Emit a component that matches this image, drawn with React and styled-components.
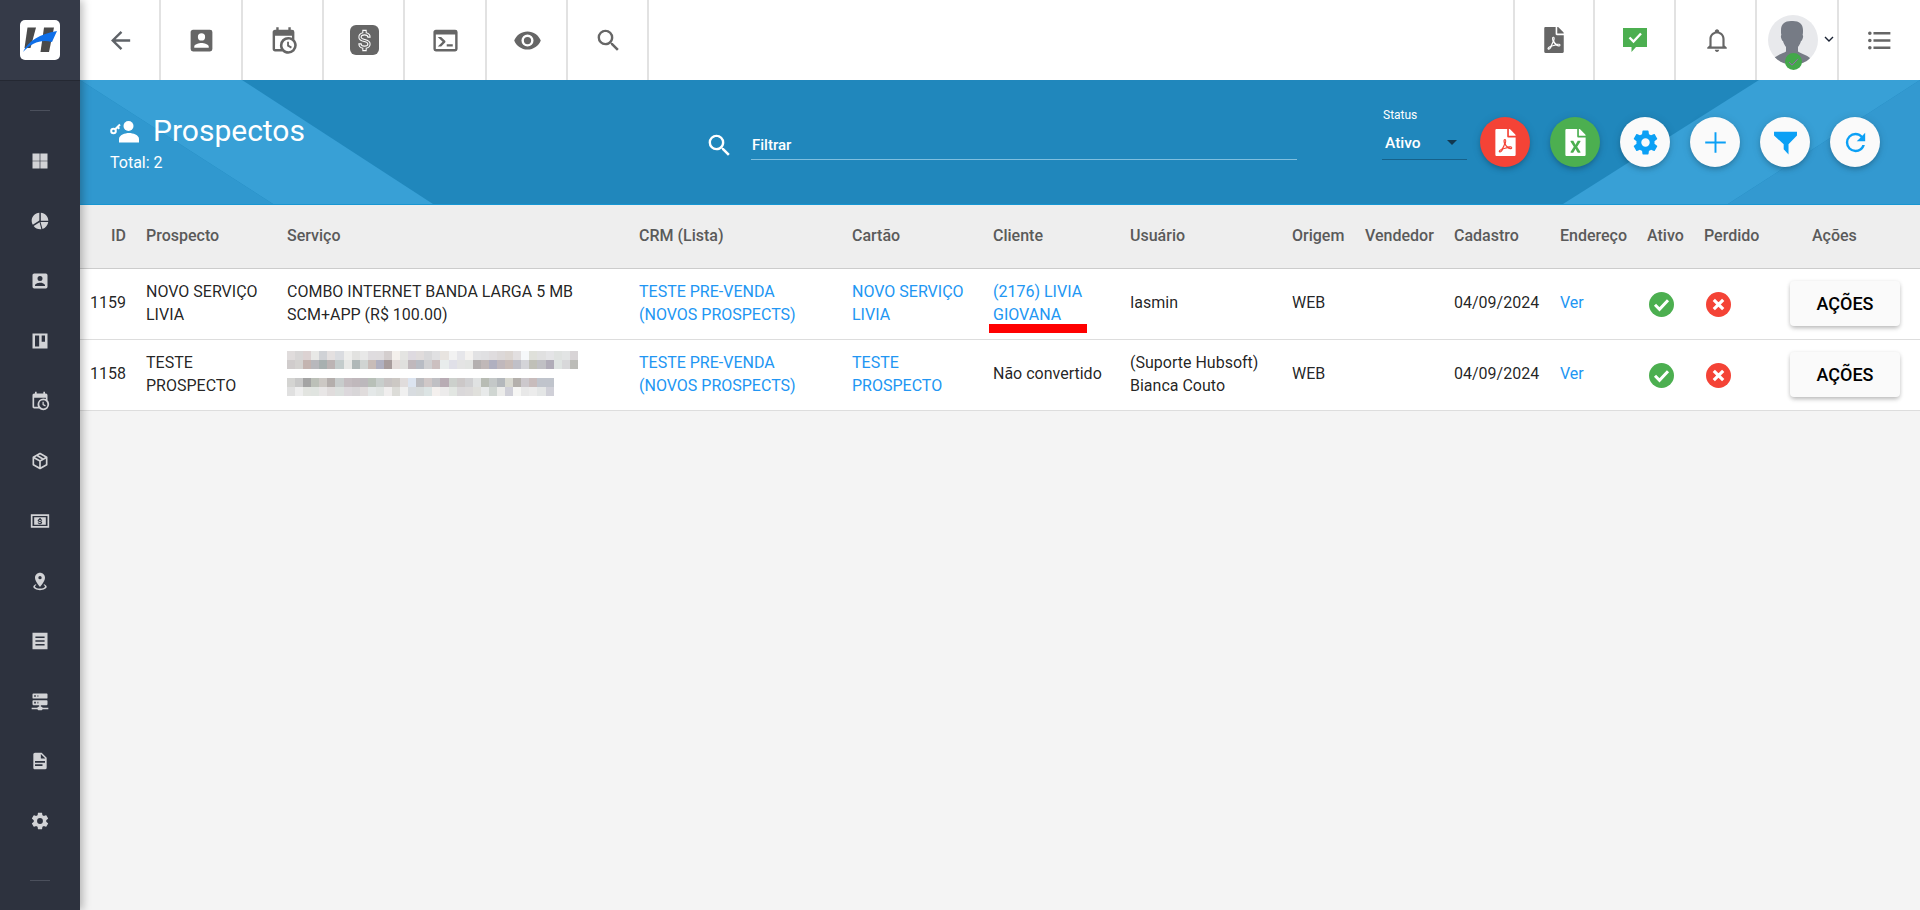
import React from 'react';
import styled, { createGlobalStyle } from 'styled-components';
import { FaFilePdf, FaFileExcel } from 'react-icons/fa';

const GlobalStyle = createGlobalStyle`
  html, body { margin: 0; height: 100%; background: #f4f4f4; }
  #root { height: 100%; }
  * { box-sizing: border-box; }
  body { font-family: Roboto, 'Noto Sans', sans-serif; color: rgba(0,0,0,.87); }
`;

const paths = {
  back: 'M20,11V13H8L13.5,18.5L12.08,19.92L4.16,12L12.08,4.08L13.5,5.5L8,11H20Z',
  contact: 'M6,17C6,15 10,14 12,14C14,14 18,15 18,17V18H6M15,9A3,3 0 0,1 12,12A3,3 0 0,1 9,9A3,3 0 0,1 12,6A3,3 0 0,1 15,9M3,5V19A2,2 0 0,0 5,21H19A2,2 0 0,0 21,19V5A2,2 0 0,0 19,3H5C3.89,3 3,3.9 3,5Z',
  calendar: 'M15,13H16.5V15.82L18.94,17.23L18.19,18.53L15,16.69V13M19,8H5V19H9.67C9.24,18.09 9,17.07 9,16A7,7 0 0,1 16,9C17.07,9 18.09,9.24 19,9.67V8M5,21C3.89,21 3,20.1 3,19V5C3,3.89 3.89,3 5,3H6V1H8V3H16V1H18V3H19A2,2 0 0,1 21,5V11.1C22.24,12.36 23,14.09 23,16A7,7 0 0,1 16,23C14.09,23 12.36,22.24 11.1,21H5M16,11.15A4.85,4.85 0 0,0 11.15,16C11.15,18.68 13.32,20.85 16,20.85A4.85,4.85 0 0,0 20.85,16C20.85,13.32 18.68,11.15 16,11.15Z',
  console: 'M20,19V7H4V19H20M20,3A2,2 0 0,1 22,5V19A2,2 0 0,1 20,21H4A2,2 0 0,1 2,19V5C2,3.89 2.9,3 4,3H20M13,17V15H18V17H13M9.58,13L5.57,9H8.4L11.7,12.3C12.09,12.69 12.09,13.33 11.7,13.72L8.42,17H5.59L9.58,13Z',
  eye: 'M12,9A3,3 0 0,0 9,12A3,3 0 0,0 12,15A3,3 0 0,0 15,12A3,3 0 0,0 12,9M12,17A5,5 0 0,1 7,12A5,5 0 0,1 12,7A5,5 0 0,1 17,12A5,5 0 0,1 12,17M12,4.5C7,4.5 2.73,7.61 1,12C2.73,16.39 7,19.5 12,19.5C17,19.5 21.27,16.39 23,12C21.27,7.61 17,4.5 12,4.5Z',
  search: 'M9.5,3A6.5,6.5 0 0,1 16,9.5C16,11.11 15.41,12.59 14.44,13.73L14.71,14H15.5L20.5,19L19,20.5L14,15.5V14.71L13.73,14.44C12.59,15.41 11.11,16 9.5,16A6.5,6.5 0 0,1 3,9.5A6.5,6.5 0 0,1 9.5,3M9.5,5C7,5 5,7 5,9.5C5,12 7,14 9.5,14C12,14 14,12 14,9.5C14,7 12,5 9.5,5Z',
  bell: 'M10 21H14C14 22.1 13.1 23 12 23S10 22.1 10 21M21 19V20H3V19L5 17V11C5 7.9 7 5.2 10 4.3V4C10 2.9 10.9 2 12 2S14 2.9 14 4V4.3C17 5.2 19 7.9 19 11V17L21 19M17 11C17 8.2 14.8 6 12 6S7 8.2 7 11V18H17V11Z',
  list: 'M7,5H21V7H7V5M7,13V11H21V13H7M4,4.5A1.5,1.5 0 0,1 5.5,6A1.5,1.5 0 0,1 4,7.5A1.5,1.5 0 0,1 2.5,6A1.5,1.5 0 0,1 4,4.5M4,10.5A1.5,1.5 0 0,1 5.5,12A1.5,1.5 0 0,1 4,13.5A1.5,1.5 0 0,1 2.5,12A1.5,1.5 0 0,1 4,10.5M7,19V17H21V19H7M4,16.5A1.5,1.5 0 0,1 5.5,18A1.5,1.5 0 0,1 4,19.5A1.5,1.5 0 0,1 2.5,18A1.5,1.5 0 0,1 4,16.5Z',
  cog: 'M12,15.5A3.5,3.5 0 0,1 8.5,12A3.5,3.5 0 0,1 12,8.5A3.5,3.5 0 0,1 15.5,12A3.5,3.5 0 0,1 12,15.5M19.43,12.97C19.47,12.65 19.5,12.33 19.5,12C19.5,11.67 19.47,11.34 19.43,11L21.54,9.37C21.73,9.22 21.78,8.95 21.66,8.73L19.66,5.27C19.54,5.05 19.27,4.96 19.05,5.05L16.56,6.05C16.04,5.66 15.5,5.32 14.87,5.07L14.5,2.42C14.46,2.18 14.25,2 14,2H10C9.75,2 9.54,2.18 9.5,2.42L9.13,5.07C8.5,5.32 7.96,5.66 7.44,6.05L4.95,5.05C4.73,4.96 4.46,5.05 4.34,5.27L2.34,8.73C2.21,8.95 2.27,9.22 2.46,9.37L4.57,11C4.53,11.34 4.5,11.67 4.5,12C4.5,12.33 4.53,12.65 4.57,12.97L2.46,14.63C2.27,14.78 2.21,15.05 2.34,15.27L4.34,18.73C4.46,18.95 4.73,19.03 4.95,18.95L7.44,17.94C7.96,18.34 8.5,18.68 9.13,18.93L9.5,21.58C9.54,21.82 9.75,22 10,22H14C14.25,22 14.46,21.82 14.5,21.58L14.87,18.93C15.5,18.67 16.04,18.34 16.56,17.94L19.05,18.95C19.27,19.03 19.54,18.95 19.66,18.73L21.66,15.27C21.78,15.05 21.73,14.78 21.54,14.63L19.43,12.97Z',
  refresh: 'M17.65,6.35C16.2,4.9 14.21,4 12,4A8,8 0 0,0 4,12A8,8 0 0,0 12,20C15.73,20 18.84,17.45 19.73,14H17.65C16.83,16.33 14.61,18 12,18A6,6 0 0,1 6,12A6,6 0 0,1 12,6C13.66,6 15.14,6.69 16.22,7.78L13,11H20V4L17.65,6.35Z',
  plus: 'M11.2 3.5h1.6v7.7h7.7v1.6h-7.7v7.7h-1.6v-7.7H3.5v-1.6h7.7z',
  funnel: 'M2.5 3H21.5V6.2L14.5 13.5V22L10.5 17.5V13.5L2.5 6.2Z',
  grid: 'M3,3H11.6V11.6H3ZM12.4,3H21V11.6H12.4ZM3,12.4H11.6V21H3ZM12.4,12.4H21V21H12.4Z',
  pie: 'M11.2,2.2V11.4L3.4,16.6C2.5,15.2 2,13.6 2,12C2,6.8 6,2.6 11.2,2.2M13,2C18,2.4 22,6.6 22,11.6H13ZM12.6,13.2H21.9C21.4,17 18.6,20.4 15,21.5ZM4.4,18L11.5,13.4L13.6,21.9C9.9,22.3 6.4,20.8 4.4,18Z',
  kanban: 'M3 3H21V21H3ZM6 5.5V18.5H11V5.5ZM14 5.5V13H18V5.5Z',
  box: 'M21,16.5C21,16.88 20.79,17.21 20.47,17.38L12.57,21.82C12.41,21.94 12.21,22 12,22C11.79,22 11.59,21.94 11.43,21.82L3.53,17.38C3.21,17.21 3,16.88 3,16.5V7.5C3,7.12 3.21,6.79 3.53,6.62L11.43,2.18C11.59,2.06 11.79,2 12,2C12.21,2 12.41,2.06 12.57,2.18L20.47,6.62C20.79,6.79 21,7.12 21,7.5V16.5M12,4.15L10.11,5.22L16,8.61L17.96,7.5L12,4.15M6.04,7.5L12,10.85L13.96,9.75L8.08,6.35L6.04,7.5M5,15.91L11,19.29V12.58L5,9.21V15.91M19,15.91V9.21L13,12.58V19.29L19,15.91Z',
  cash: 'M1 4H23V20H1ZM3 6V18H21V6ZM5 7.5H19V16.5H5ZM11.2 8.5V9.6C10 9.8 9.2 10.6 9.2 11.5C9.2 12.6 10.2 13 11.6 13.3C12.5 13.5 13.1 13.7 13.1 14.1C13.1 14.5 12.6 14.7 12 14.7C11.3 14.7 10.8 14.4 10.7 13.9H9.2C9.3 14.8 10.1 15.4 11.2 15.6V16H12.8V15.6C13.9 15.4 14.6 14.7 14.6 13.9C14.6 12.8 13.6 12.4 12.3 12.1C11.3 11.9 10.7 11.8 10.7 11.4C10.7 11 11.2 10.8 11.9 10.8C12.5 10.8 13 11.1 13.1 11.6H14.6C14.5 10.7 13.8 10 12.8 9.7V8.5Z',
  pin: 'M12,2C15.31,2 18,4.66 18,7.95C18,12.41 12,19 12,19C12,19 6,12.41 6,7.95C6,4.66 8.69,2 12,2M12,6A2,2 0 0,0 10,8A2,2 0 0,0 12,10A2,2 0 0,0 14,8A2,2 0 0,0 12,6M20,19C20,21.21 16.42,23 12,23C7.58,23 4,21.21 4,19C4,17.71 5.22,16.56 7.11,15.83L7.75,16.74C6.67,17.19 6,17.81 6,18.5C6,19.88 8.69,21 12,21C15.31,21 18,19.88 18,18.5C18,17.81 17.33,17.19 16.25,16.74L16.89,15.83C18.78,16.56 20,17.71 20,19Z',
  receipt: 'M3 2H21V22H3ZM6.5 6.5V8.5H17.5V6.5ZM6.5 11V13H17.5V11ZM6.5 15.5V17.5H17.5V15.5Z',
  server: 'M13,19H14A1,1 0 0,1 15,20H22V22H15A1,1 0 0,1 14,23H10A1,1 0 0,1 9,22H2V20H9A1,1 0 0,1 10,19H11V17H4A1,1 0 0,1 3,16V12A1,1 0 0,1 4,11H20A1,1 0 0,1 21,12V16A1,1 0 0,1 20,17H13V19M4,3H20A1,1 0 0,1 21,4V8A1,1 0 0,1 20,9H4A1,1 0 0,1 3,8V4A1,1 0 0,1 4,3M9,7H10V5H9V7M9,15H10V13H9V15M5,5V7H7V5H5M5,13V15H7V13H5Z',
  doc: 'M13,9H18.5L13,3.5V9M6,2H14L20,8V20A2,2 0 0,1 18,22H6C4.89,22 4,21.1 4,20V4C4,2.89 4.89,2 6,2M15,18V16H6V18H15M18,14V12H6V14H18Z',
  dollar: 'M7,15H9C9,16.08 10.37,17 12,17C13.63,17 15,16.08 15,15C15,13.9 13.96,13.5 11.76,12.97C9.64,12.44 7,11.78 7,9C7,7.21 8.47,5.69 10.5,5.18V3H13.5V5.18C15.53,5.69 17,7.21 17,9H15C15,7.92 13.63,7 12,7C10.37,7 9,7.92 9,9C9,10.1 10.04,10.5 12.24,11.03C14.36,11.56 17,12.22 17,15C17,16.79 15.53,18.31 13.5,18.82V21H10.5V18.82C8.47,18.31 7,16.79 7,15Z',
};

const Glyph = styled.svg`
  display: block;
  flex: none;
  width: ${(p) => p.$size || 24}px;
  height: ${(p) => p.$size || 24}px;
  fill: ${(p) => p.$color || '#666'};
  fill-rule: evenodd;
`;

const Icon = ({ name, size, color }) => (
  <Glyph viewBox="0 0 24 24" $size={size} $color={color}>
    <path d={paths[name]} />
  </Glyph>
);

const Shell = styled.div`
  display: flex;
  height: 100vh;
  overflow: hidden;
`;

const Sidebar = styled.aside`
  flex: 0 0 80px;
  display: flex;
  flex-direction: column;
  align-items: center;
  background: #2d323e;
  box-shadow: 3px 0 8px rgba(0, 0, 0, 0.25);
  position: relative;
  z-index: 3;
`;

const LogoBar = styled.div`
  width: 100%;
  height: 81px;
  flex: none;
  display: flex;
  align-items: center;
  justify-content: center;
  background: #353a48;
  border-bottom: 1px solid #242832;
  padding-bottom: 1px;
`;

const LogoBox = styled.svg`
  width: 40px;
  height: 40px;
  display: block;
`;

const SideRule = styled.hr`
  width: 20px;
  height: 1px;
  margin: ${(p) => p.$margin};
  border: 0;
  background: #4b505c;
`;

const SideItem = styled.a`
  width: 100%;
  height: 60px;
  flex: none;
  display: flex;
  align-items: center;
  justify-content: center;
`;

const Main = styled.main`
  flex: 1;
  min-width: 0;
  display: flex;
  flex-direction: column;
`;

const TopBar = styled.header`
  height: 80px;
  flex: none;
  display: flex;
  justify-content: space-between;
  background: #fff;
`;

const ToolGroup = styled.nav`
  display: flex;
`;

const ToolCell = styled.a`
  width: 81.33px;
  height: 80px;
  display: flex;
  align-items: center;
  justify-content: center;
  position: relative;
  padding-left: ${(p) => (p.$open || p.$edge ? '0' : '2px')};
  border-right: ${(p) => (p.$open ? '0' : '2px solid #e2e2e2')};
  border-left: ${(p) => (p.$edge ? '2px solid #e2e2e2' : '0')};
`;

const DollarTile = styled.span`
  width: 29px;
  height: 30px;
  border-radius: 6px;
  background: #666;
  display: flex;
  align-items: center;
  justify-content: center;
  svg { fill: none; stroke: #fff; stroke-width: 0.9; }
`;

const Avatar = styled.span`
  width: 50px;
  height: 50px;
  border-radius: 50%;
  background: #e8e9ec;
  overflow: hidden;
  display: block;
`;

const AvatarWrap = styled.span`
  position: relative;
  display: block;
  width: 50px;
  height: 50px;
  margin-left: -11px;
`;

const OnlineBadge = styled.svg`
  position: absolute;
  left: 17px;
  top: 38px;
  width: 17px;
  height: 17px;
`;

const Chevron = styled.svg`
  position: absolute;
  right: 3px;
  top: 35px;
  width: 10px;
  height: 8px;
`;

const Banner = styled.section`
  height: 125px;
  flex: none;
  position: relative;
  overflow: hidden;
  background: #2087bc;
  border-bottom: 1px solid #1796d2;
`;

const Facet = styled.i`
  position: absolute;
  inset: 0;
  background: ${(p) => p.$color};
  clip-path: polygon(${(p) => p.$points});
`;

const BannerRow = styled.div`
  position: relative;
  height: 100%;
  display: flex;
  align-items: flex-start;
  padding: 37px 40px 0 30px;
`;

const TitleBlock = styled.div`
  flex: 0 0 598px;
  color: #fff;
`;

const TitleRow = styled.div`
  display: flex;
  align-items: center;
  gap: 14px;
  height: 30px;
  margin-top: -1px;
`;

const Title = styled.h1`
  margin: 0;
  font-size: 30px;
  font-weight: 400;
  line-height: 30px;
`;

const Total = styled.div`
  margin-top: 7px;
  font-size: 16px;
  line-height: 20px;
`;

const SearchBox = styled.div`
  flex: 0 0 589px;
  margin-top: 12px;
  display: flex;
  align-items: flex-start;
  gap: 17px;
`;

const SearchIcon = styled.span`
  margin: 2px 0 0 -3px;
`;

const SearchField = styled.div`
  flex: 1;
  height: 31px;
  padding: 6px 0 0 1px;
  border-bottom: 1px solid #7fbfdf;
  color: #fff;
  font-size: 15px;
  font-weight: 500;
  line-height: 20px;
`;

const ActionGroup = styled.div`
  margin-left: auto;
  display: flex;
  align-items: flex-start;
  gap: 20px;
`;

const StatusSelect = styled.div`
  width: 85px;
  height: 43px;
  margin: 0 -7px 0 0;
  position: relative;
  color: #fff;
  border-bottom: 1px solid #16618a;
`;

const StatusLabel = styled.div`
  font-size: 12px;
  line-height: 14px;
  margin-top: -9px;
  padding-left: 1px;
`;

const StatusValue = styled.div`
  font-size: 15.5px;
  line-height: 20px;
  font-weight: 500;
  margin: 11px 0 0 3px;
`;

const Caret = styled.span`
  position: absolute;
  right: 10px;
  top: 23px;
  border-left: 5px solid transparent;
  border-right: 5px solid transparent;
  border-top: 5px solid #12384f;
`;

const Fab = styled.button`
  width: 50px;
  height: 50px;
  border: 0;
  padding: 0;
  border-radius: 50%;
  background: ${(p) => p.$bg || '#fafafa'};
  color: ${(p) => p.$fg || '#0ba0f5'};
  display: flex;
  align-items: center;
  justify-content: center;
  box-shadow: 0 3px 5px -1px rgba(0, 0, 0, 0.2), 0 1px 10px 0 rgba(0, 0, 0, 0.12);
`;

const Table = styled.table`
  width: 1840px;
  table-layout: fixed;
  border-collapse: collapse;
  font-size: 16px;
  line-height: 23px;
`;

const Head = styled.th`
  width: ${(p) => p.$w}px;
  height: 63px;
  padding: 0 ${(p) => p.$pr || 0}px 2px ${(p) => p.$pl || 0}px;
  text-align: ${(p) => p.$align || 'left'};
  font-weight: 500;
  color: #5a5a5a;
  background: #eee;
  border-bottom: 1px solid #ccc;
`;

const Row = styled.tr`
  height: 71px;
  background: #fff;
  border-bottom: 1px solid #ddd;
`;

const Cell = styled.td`
  padding: 0 ${(p) => p.$pr || 0}px 2px ${(p) => p.$pl || 0}px;
  text-align: ${(p) => p.$align || 'left'};
  overflow: visible;
`;

const LinkText = styled.a`
  color: #2196f3;
  position: relative;
  display: inline-block;
`;

const RedMark = styled.span`
  position: absolute;
  left: -4px;
  top: 44px;
  width: 98px;
  height: 9px;
  background: #f00;
`;

const Mosaic = styled.div`
  display: flex;
  flex-direction: column;
  gap: 9px;
`;

const TileRow = styled.div`
  display: flex;
  height: 9px;
`;

const Tile = styled.span`
  width: 8.08px;
  height: 9px;
  flex: none;
  background: ${(p) => p.$c};
`;

const ActionButton = styled.button`
  display: block;
  width: 110px;
  height: 45px;
  margin-top: 1px;
  border: 0;
  border-radius: 4px;
  background: #fafafa;
  color: #000;
  font: 500 18px Roboto, sans-serif;
  box-shadow: 0 3px 5px -1px rgba(0, 0, 0, 0.2), 0 1px 4px 0 rgba(0, 0, 0, 0.14);
`;

const StateDot = styled.svg`
  display: block;
  width: 25px;
  height: 25px;
  margin: 4px 0 0 2px;
`;

const blur = [
  'e0dcdc d8d6d6 dcd2d2 e8e8e6 d0d2d6 e4e0e0 dadce0 eeeeec e2e2e0 e8e8e8 dfdcdf dfdcde d4cece f4f0ec e4e4e2 dedae0 e0dcdc d8d8da e0e0e2 e8e4e0 f2f2f2 e6e6ea f4f2f0 e2e2e4 e0e0e2 dfdcde dcd8d8 dcd6d2 e2dfe0 f6f8fa dfe0da e0e0e0 e4e4e6 dfe2e0 e2e4e4 d8d4d6',
  'd0cccc d4d2d0 c4b4b0 b8b8bc a8b0b0 bcb4b4 c4cccc e8e8e6 b0b8b8 d0d4d2 c8bcb8 b0b0c0 a89c9c e4dcda e0e0de c0b8bc b8bcc4 d0d0d2 ccc0c0 e8ecec e0e0e8 e4e4e4 e2e4e2 b4b0b0 c0b8b8 b0b0c0 c0b8bc c8bcb8 c0c0c8 d4d4d8 c0c0b8 c0c0c4 b0acb8 dfe4e2 d8d8da bcbcb8',
  'd4d4d2 c8c8c8 a4a4a4 bcc0b8 ccc8c4 b4aeac c8cccc c4bcc0 c0b8bc bcb8bc b8c0b8 c8cecc c8c4c4 ccc8c4 e0dcdc dce4f0 bcbcc0 d0c8c8 c0c0c4 b8acb4 ccd0cc ccc8c8 d0d0d2 e0e2e2 b8bcb4 c4c8c8 b4b8bc d8d8d0 b4b0ac ccc8cc c8bcbc c0c4cc c0c4cc',
  'e0e0e0 eeeeee e2e4e0 e0e4e0 e8e6e6 e0dcdc dce0de dcd8dc d8d6d8 e0dcdc e4e8e8 e0e4e2 f0eeee dcdcd8 f0f0f0 d8dce0 d8dcdc dce4e4 f4f0ee ecebeb e2e6e2 dad8da dcdada e0e0dc e8eaea d0d6d2 ececea d0d0d8 f6f6f4 e8e8e8 ececec e4e6e6 d0d0d8',
];

const BlurLine = ({ rows }) => (
  <div>
    {rows.map((row, r) => (
      <TileRow key={r}>
        {row.split(' ').map((c, i) => <Tile key={i} $c={`#${c}`} />)}
      </TileRow>
    ))}
  </div>
);

const Check = () => (
  <StateDot viewBox="0 0 25 25">
    <circle cx="12.5" cy="12.5" r="12.5" fill="#4caf50" />
    <path d="M6 12.800l4.500 4.500 8.500-9" fill="none" stroke="#fff" strokeWidth="3" />
  </StateDot>
);

const Cross = () => (
  <StateDot viewBox="0 0 25 25">
    <circle cx="12.5" cy="12.5" r="12.5" fill="#f44336" />
    <path d="M7.800 7.800l9.400 9.400M17.200 7.800l-9.400 9.400" fill="none" stroke="#fff" strokeWidth="3.200" />
  </StateDot>
);

const sideItems = ['grid', 'pie', 'contact', 'kanban', 'calendar', 'box', 'cash', 'pin', 'receipt', 'server', 'doc', 'cog'];

const columns = [
  { label: 'ID', w: 66, pr: 20, align: 'right' },
  { label: 'Prospecto', w: 141 },
  { label: 'Serviço', w: 352 },
  { label: 'CRM (Lista)', w: 213 },
  { label: 'Cartão', w: 141 },
  { label: 'Cliente', w: 137 },
  { label: 'Usuário', w: 162 },
  { label: 'Origem', w: 73 },
  { label: 'Vendedor', w: 89 },
  { label: 'Cadastro', w: 106 },
  { label: 'Endereço', w: 87 },
  { label: 'Ativo', w: 57 },
  { label: 'Perdido', w: 86 },
  { label: 'Ações', w: 130, pl: 22 },
];

const App = () => (
  <Shell>
    <GlobalStyle />
    <Sidebar>
      <LogoBar>
        <LogoBox viewBox="0 0 40 40">
          <rect width="40" height="40" rx="5" fill="#fff" />
          <path d="M7.500 7.500H16L10.500 28H4.500Z" fill="#4a4a4a" />
          <path d="M24 7.500H34L29 32H20.500Z" fill="#4a4a4a" />
          <path d="M3 32C8 21 20 14 37 11L32 22C22 19 12 22 3 32Z" fill="#0f6fe8" />
        </LogoBox>
      </LogoBar>
      <SideRule $margin="29px 0 20px" />
      {sideItems.map((name) => (
        <SideItem key={name}>
          <Icon name={name} size={20} color="#d2d3d6" />
        </SideItem>
      ))}
      <SideRule $margin="29px 0 0" />
    </Sidebar>

    <Main>
      <TopBar>
        <ToolGroup>
          <ToolCell><Icon name="back" size={29} color="#5f6368" /></ToolCell>
          <ToolCell><Icon name="contact" size={29} /></ToolCell>
          <ToolCell><Icon name="calendar" size={29} /></ToolCell>
          <ToolCell><DollarTile><Icon name="dollar" size={27} /></DollarTile></ToolCell>
          <ToolCell><Icon name="console" size={29} /></ToolCell>
          <ToolCell><Icon name="eye" size={29} /></ToolCell>
          <ToolCell><Icon name="search" size={29} /></ToolCell>
        </ToolGroup>
        <ToolGroup>
          <ToolCell $edge><FaFilePdf size={26} color="#666" /></ToolCell>
          <ToolCell>
            <Glyph viewBox="0 0 26 26" $size={26} $color="#4caf50">
              <path d="M1 1H25V20H14L9.500 25V20H1Z" />
              <path d="M7.500 10.500l4 4 7.500-8" fill="none" stroke="#fff" strokeWidth="2.400" />
            </Glyph>
          </ToolCell>
          <ToolCell><Icon name="bell" size={26} /></ToolCell>
          <ToolCell>
            <AvatarWrap>
              <Avatar>
                <svg viewBox="0 0 50 50" width="50" height="50">
                  <path fill="#767b85" d="M25 6c6 0 10 3 10 9 0 2 0 4-.4 5 .8.3.7 2.500-.3 4.500-.6 1.200-.9 1.500-1.300 1.600-.6 2.400-1.800 4.500-3 5.900v4.500c3 2 9 3.500 12 6.500l-2 7H8l-2-7c3-3 9-4.500 12-6.500V32c-1.200-1.400-2.400-3.500-3-5.900-.4-.1-.7-.4-1.300-1.600-1-2-1.100-4.200-.3-4.500-.4-1-.4-3-.4-5 0-6 4-9 10-9Z" />
                </svg>
              </Avatar>
              <OnlineBadge viewBox="0 0 17 17">
                <circle cx="8.500" cy="8.500" r="8.500" fill="#43a84a" />
                <path d="M4 9l3 3.200 6-6.400" fill="none" stroke="#9a62b5" strokeWidth="1" />
              </OnlineBadge>
            </AvatarWrap>
            <Chevron viewBox="0 0 10 8"><path d="M1 2l4 4 4-4" fill="none" stroke="#1a2233" strokeWidth="1.400" /></Chevron>
          </ToolCell>
          <ToolCell $open><Icon name="list" size={29} /></ToolCell>
        </ToolGroup>
      </TopBar>

      <Banner>
        <Facet $color="#38a0d6" $points="0 0, 162px 0, 353px 124px, 193px 124px" />
        <Facet $color="#3098cf" $points="0 0, 193px 124px, 0 124px" />
        <Facet $color="#38a0d6" $points="1679px 0, 1840px 0, 1648px 124px, 1483px 124px" />
        <Facet $color="#3399d0" $points="1840px 0, 1840px 124px, 1648px 124px" />
        <BannerRow>
          <TitleBlock>
            <TitleRow>
              <Glyph viewBox="0 0 29 22" $size={29} $color="#fff">
                <circle cx="18.500" cy="5.500" r="5" />
                <path d="M9 22V18.500C9 14.500 15 12.500 19 12.500S29 14.500 29 18.500V22Z" />
                <circle cx="3.500" cy="10.500" r="2.300" fill="none" stroke="#fff" strokeWidth="2" />
                <path d="M5.200 8.800L10 4M7.500 6.500l1.800 1.800" fill="none" stroke="#fff" strokeWidth="2" />
              </Glyph>
              <Title>Prospectos</Title>
            </TitleRow>
            <Total>Total: 2</Total>
          </TitleBlock>
          <SearchBox>
            <SearchIcon><Icon name="search" size={29} color="#fff" /></SearchIcon>
            <SearchField>Filtrar</SearchField>
          </SearchBox>
          <ActionGroup>
            <StatusSelect>
              <StatusLabel>Status</StatusLabel>
              <StatusValue>Ativo</StatusValue>
              <Caret />
            </StatusSelect>
            <Fab $bg="#f44336" $fg="#fff"><FaFilePdf size={27} /></Fab>
            <Fab $bg="#4caf50" $fg="#fff"><FaFileExcel size={27} /></Fab>
            <Fab><Icon name="cog" size={29} color="#0ba0f5" /></Fab>
            <Fab><Icon name="plus" size={29} color="#0ba0f5" /></Fab>
            <Fab><Icon name="funnel" size={29} color="#0ba0f5" /></Fab>
            <Fab><Icon name="refresh" size={29} color="#0ba0f5" /></Fab>
          </ActionGroup>
        </BannerRow>
      </Banner>

      <Table>
        <thead>
          <tr>
            {columns.map((c) => (
              <Head key={c.label} $w={c.w} $pr={c.pr} $pl={c.pl} $align={c.align}>{c.label}</Head>
            ))}
          </tr>
        </thead>
        <tbody>
          <Row>
            <Cell $pr={20} $align="right">1159</Cell>
            <Cell>NOVO SERVIÇO<br />LIVIA</Cell>
            <Cell>COMBO INTERNET BANDA LARGA 5 MB<br />SCM+APP (R$ 100.00)</Cell>
            <Cell><LinkText>TESTE PRE-VENDA<br />(NOVOS PROSPECTS)</LinkText></Cell>
            <Cell><LinkText>NOVO SERVIÇO<br />LIVIA</LinkText></Cell>
            <Cell><LinkText>(2176) LIVIA<br />GIOVANA<RedMark /></LinkText></Cell>
            <Cell>Iasmin</Cell>
            <Cell>WEB</Cell>
            <Cell />
            <Cell>04/09/2024</Cell>
            <Cell><LinkText>Ver</LinkText></Cell>
            <Cell><Check /></Cell>
            <Cell><Cross /></Cell>
            <Cell><ActionButton>AÇÕES</ActionButton></Cell>
          </Row>
          <Row>
            <Cell $pr={20} $align="right">1158</Cell>
            <Cell>TESTE<br />PROSPECTO</Cell>
            <Cell>
              <Mosaic>
                <BlurLine rows={blur.slice(0, 2)} />
                <BlurLine rows={blur.slice(2)} />
              </Mosaic>
            </Cell>
            <Cell><LinkText>TESTE PRE-VENDA<br />(NOVOS PROSPECTS)</LinkText></Cell>
            <Cell><LinkText>TESTE<br />PROSPECTO</LinkText></Cell>
            <Cell>Não convertido</Cell>
            <Cell>(Suporte Hubsoft)<br />Bianca Couto</Cell>
            <Cell>WEB</Cell>
            <Cell />
            <Cell>04/09/2024</Cell>
            <Cell><LinkText>Ver</LinkText></Cell>
            <Cell><Check /></Cell>
            <Cell><Cross /></Cell>
            <Cell><ActionButton>AÇÕES</ActionButton></Cell>
          </Row>
        </tbody>
      </Table>
    </Main>
  </Shell>
);

export default App;
